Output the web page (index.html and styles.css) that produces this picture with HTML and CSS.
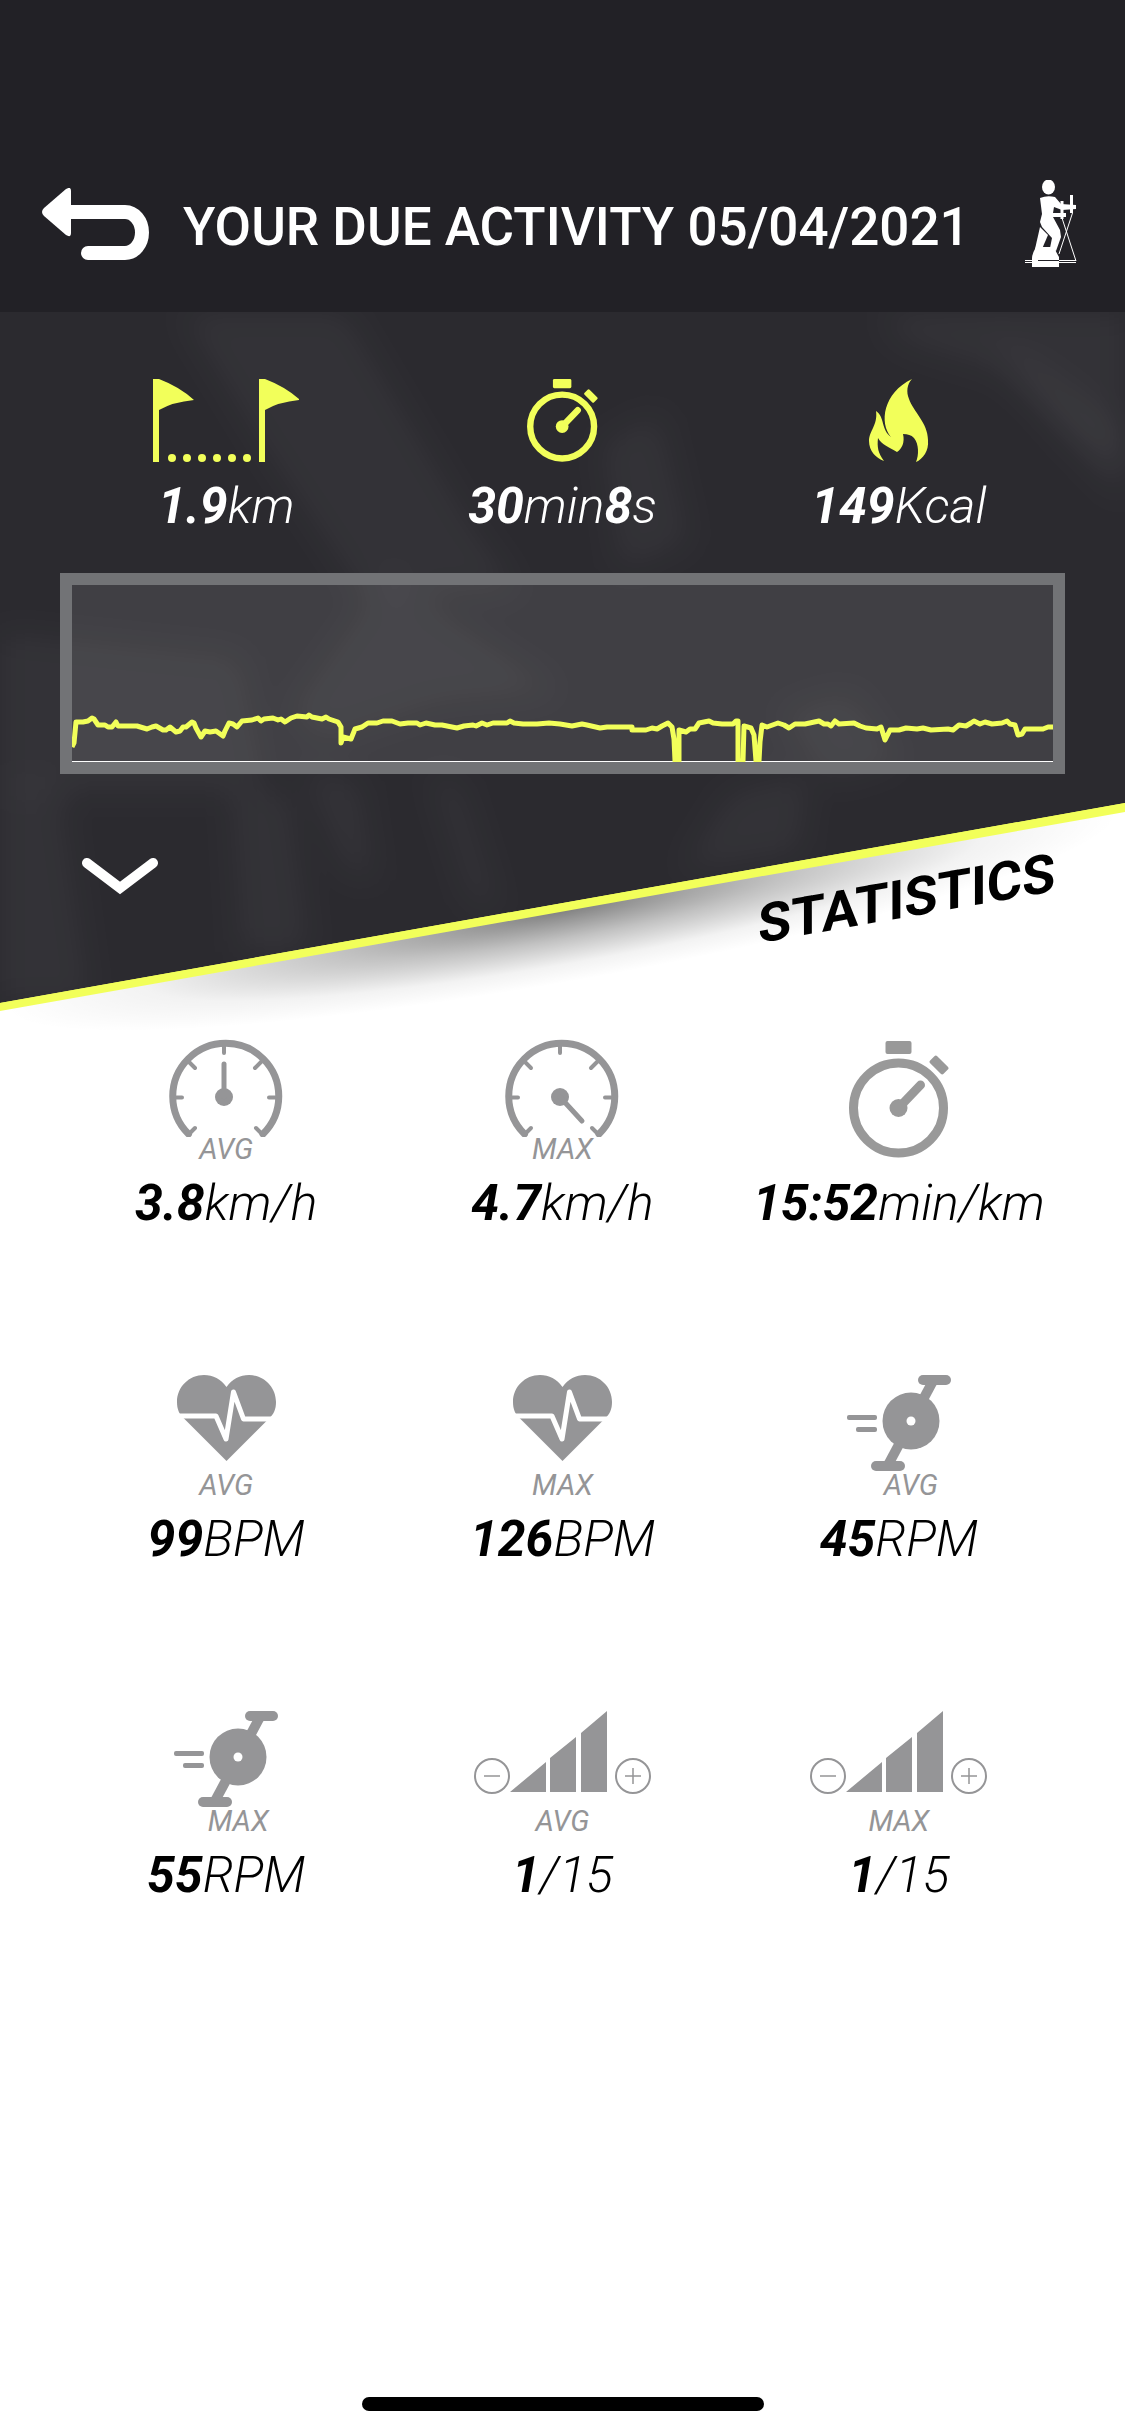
FILE: index.html
```html
<!DOCTYPE html>
<html lang="en">
<head>
    <meta charset="UTF-8">
    <meta name="viewport" content="width=device-width, initial-scale=1.0">
    <title>Your due activity</title>
    <link rel="stylesheet" href="styles.css">
</head>
<body>
    <!-- Shared icons -->
    <svg class="sprite" aria-hidden="true">
        <symbol id="stopwatch" viewBox="0 0 100 117">
            <circle cx="49.500" cy="67" r="45" fill="none" stroke="currentColor" stroke-width="9"/>
            <rect x="36.500" y="0" width="26" height="13" rx="2"/>
            <rect x="80.500" y="19" width="19" height="10" rx="2" transform="rotate(45 90 24)"/>
            <path d="M49.500 67L71.500 44" stroke="currentColor" stroke-width="9" stroke-linecap="round"/>
            <circle cx="49.500" cy="67" r="9"/>
        </symbol>
        <symbol id="dial" viewBox="0 0 114 98">
            <g fill="none" stroke="currentColor" stroke-linecap="round" stroke-linejoin="round">
                <path stroke-width="7" d="M19.500 95A53 53 0 1 1 94 95"/>
                <path stroke-width="4" d="M55 6v8M6 58.500h7M100 58.500h7M19 22l7 7M93 22l-7 7M20 95l6-6M93 95l-6-6"/>
            </g>
            <circle cx="55" cy="58" r="9"/>
        </symbol>
        <symbol id="heart" viewBox="0 0 99 86">
            <path d="M49.500 12C55 4 63 0 72 0C87 0 99 12 99 27C99 34 97 39 92 43.500L49.500 86L7 43.500C2 39 0 34 0 27C0 12 12 0 27 0C36 0 44 4 49.500 12Z"/>
            <path d="M0 41H39L49 64L56.500 17L66.500 44H99" fill="none" stroke="#fff" stroke-width="5" stroke-linejoin="round"/>
        </symbol>
        <symbol id="pedal" viewBox="0 0 104 96">
            <path d="M86 6L41 90" stroke="currentColor" stroke-width="10"/>
            <rect x="71" y="0" width="33" height="10" rx="5"/>
            <rect x="24" y="86" width="34" height="10" rx="5"/>
            <rect x="0" y="40" width="30" height="5" rx="2"/>
            <rect x="9" y="52" width="21" height="5" rx="2"/>
            <circle cx="64" cy="46" r="28.500"/>
            <circle cx="64" cy="46" r="4.500" fill="#fff"/>
        </symbol>
        <symbol id="levels" viewBox="0 0 177 84">
            <path d="M36 81L72 51V81ZM76 81V47L102 26V81ZM107 81V22L133 0V81Z"/>
            <g fill="none" stroke="currentColor" stroke-width="2">
                <circle cx="18" cy="65" r="17"/>
                <circle cx="159" cy="65" r="17"/>
                <path stroke-width="1.500" d="M10 65h16M151 65h16M159 57v16"/>
            </g>
        </symbol>
    </svg>

    <header class="topbar">
        <button class="icon-btn" type="button" aria-label="Back">
            <svg width="108" height="72" viewBox="0 0 108 72">
                <path d="M24 1Q29-2 29 3V45Q29 50 24 47L2 28Q-2 24 2 20Z" fill="#fff"/>
                <path d="M24 24H83A17 20.500 0 0 1 83 65H46" fill="none" stroke="#fff" stroke-width="14" stroke-linecap="round"/>
            </svg>
        </button>
        <h1>YOUR DUE ACTIVITY 05/04/2021</h1>
        <svg class="machine" width="52" height="88" viewBox="0 0 52 88" fill="#fff">
            <ellipse cx="23.500" cy="7" rx="6.500" ry="7.500"/>
            <path d="M15 18Q22 15 30 17L36 24L51 25V29L37 30L29 27L28 33H41V37H28L35 50L36 57L31 71L25 68L27 58L17 47L15 42L17 34Z"/>
            <path d="M15 47L23 55L17 69H10Z"/>
            <path d="M11 67H29Q31 72 34 77V87H7V78Q7 74 11 67Z"/>
            <path d="M46.500 15v18M37 21v18" stroke="#fff" stroke-width="3"/>
            <path d="M37 38L51 81M47.500 33L34 74M0 80.500H51M0 82.500H51" stroke="#fff" stroke-width="1" fill="none"/>
            <path d="M13 80.500H34" stroke="#222126" stroke-width="1"/>
        </svg>
    </header>

    <section class="hero">
        <svg class="backdrop" viewBox="0 0 1125 750" preserveAspectRatio="none" aria-hidden="true">
            <defs>
                <radialGradient id="shade">
                    <stop offset="0" stop-color="#000" stop-opacity=".5"/>
                    <stop offset=".4" stop-color="#000" stop-opacity=".24"/>
                    <stop offset=".75" stop-color="#000" stop-opacity=".05"/>
                    <stop offset="1" stop-color="#000" stop-opacity="0"/>
                </radialGradient>
                <filter id="soft" x="-30%" y="-30%" width="160%" height="160%"><feGaussianBlur stdDeviation="16"/></filter>
                <clipPath id="slope"><path d="M0 0H1125V491L0 691Z"/></clipPath>
            </defs>
            <ellipse cx="562" cy="598" rx="565" ry="72" fill="url(#shade)" transform="rotate(-10 562 598)"/>
            <path d="M0 0H1125V500L0 699Z" fill="#f2ff5a"/>
            <g clip-path="url(#slope)">
                <path d="M0 0H1125V491L0 691Z" fill="#2b2a2f"/>
                <g fill="#fff" fill-opacity=".04" filter="url(#soft)">
                    <path d="M180 0H345L410 110L470 210L520 280H360L260 130Z"/>
                    <path d="M880 0H1125V160L1000 60L900 30Z"/>
                    <path d="M990 20L1125 120V190L1060 120Z"/>
                    <path d="M600 130L660 100L690 230L620 260Z"/>
                    <path d="M0 320L240 345L265 470L250 480H0Z"/>
                    <path d="M290 400L390 260L440 300L560 380L440 390L320 430Z"/>
                    <path d="M300 450L360 470L375 570L345 560Z"/>
                    <path d="M430 460L460 470L500 600L470 590Z"/>
                    <path d="M780 400L850 380L900 450L830 470Z"/>
                    <path d="M730 480L810 460L800 540L680 560Z"/>
                    <path d="M0 470H60L90 690H0Z"/>
                    <path d="M230 480H290L310 640H240Z"/>
                </g>
            </g>
        </svg>

        <div class="grid summary">
            <div class="stat">
                <svg width="146" height="83" viewBox="0 0 146 83">
                    <path id="flag" d="M0 0H6Q27 8 41 21Q20 23 6 31V83H0Z"/>
                    <use href="#flag" x="106"/>
                    <path d="M19 79h76" fill="none" stroke="currentColor" stroke-width="8" stroke-linecap="round" stroke-dasharray="0 15"/>
                </svg>
                <p class="value"><strong>1.9</strong>km</p>
            </div>
            <div class="stat">
                <svg width="71" height="83"><use href="#stopwatch"/></svg>
                <p class="value"><strong>30</strong>min<strong>8</strong>s</p>
            </div>
            <div class="stat">
                <svg width="60" height="83" viewBox="0 0 60 83">
                    <path d="M43 0C38 5 37 13 40 20C44 32 59 44 59 61C60 72 54 80 47 83C50 76 50 65 45 59C42 56 39 55 34 55C36 63 33 70 28 73C20 68 13 66 9 59C8 68 9 74 15 82C7 79 0 72 0 62C0 52 9 46 7 32C16 38 12 51 22 58C10 44 14 14 43 0Z"/>
                </svg>
                <p class="value"><strong>149</strong>Kcal</p>
            </div>
        </div>

        <div class="chart">
            <svg viewBox="0 0 981 177" preserveAspectRatio="none" role="img" aria-label="Speed over time">
                <path d="M0 176.500H981" stroke="#fff" stroke-width="1"/>
                <polyline fill="none" stroke="#f2ff5a" stroke-width="5" stroke-linejoin="round" points="0,162 2,158 4,137 11,137 16,136 20,133 22,134 26,140 33,140 36,142 40,142 44,137 46,141 52,141 65,141 75,144 80,142 84,141 91,145 94,145 98,142 104,147 108,146 111,142 114,142 120,137 122,138 124,143 129,152 133,146 138,147 144,146 151,151 153,146 157,138 161,139 165,142 170,136 180,135 186,133 189,136 192,134 201,133 206,135 209,134 213,137 219,133 225,131 235,132 237,130 240,132 250,134 254,132 257,134 266,137 269,142 269,158 271,152 279,154 283,144 290,142 296,138 305,138 311,136 320,136 328,139 336,138 345,138 348,140 354,138 363,140 370,140 385,143 392,141 401,140 404,141 410,138 415,140 421,138 435,138 438,136 442,138 451,139 465,139 477,138 488,139 500,141 510,139 515,140 528,143 535,142 542,142 560,142 560,145 574,145 580,143 585,144 590,141 596,138 600,142 602,154 603,176 607,176 607,145 614,147 618,144 623,144 627,138 637,136 641,138 650,139 661,139 664,136 666,136 666,176 671,176 672,141 679,143 682,150 684,176 687,176 688,157 690,140 695,142 706,138 712,140 717,143 723,139 733,139 747,136 752,139 756,139 759,141 763,136 767,139 782,138 788,141 794,143 805,144 809,142 813,155 818,145 827,145 834,143 845,144 851,143 859,145 876,144 881,145 887,140 894,141 899,138 902,136 908,139 913,137 920,139 930,138 935,136 938,139 943,140 946,150 950,149 953,144 971,144 976,142 981,142"/>
            </svg>
        </div>

        <div class="hero-foot">
            <button class="icon-btn" type="button" aria-label="Collapse">
                <svg width="76" height="38" viewBox="0 0 76 38">
                    <path d="M5 6L38 31L71 6" fill="none" stroke="#fff" stroke-width="10" stroke-linecap="round"/>
                </svg>
            </button>
            <h2>STATISTICS</h2>
        </div>
    </section>

    <main class="grid stats">
        <div class="stat">
            <div class="pic">
                <svg width="114" height="98"><use href="#dial"/><path d="M55 58V25" stroke="currentColor" stroke-width="5" stroke-linecap="round"/></svg>
            </div>
            <span class="label">AVG</span>
            <p class="value"><strong>3.8</strong>km/h</p>
        </div>
        <div class="stat">
            <div class="pic">
                <svg width="114" height="98"><use href="#dial"/><path d="M55 58L77 82" stroke="currentColor" stroke-width="5" stroke-linecap="round"/></svg>
            </div>
            <span class="label">MAX</span>
            <p class="value"><strong>4.7</strong>km/h</p>
        </div>
        <div class="stat">
            <div class="pic tall">
                <svg width="100" height="117"><use href="#stopwatch"/></svg>
            </div>
            <p class="value"><strong>15:52</strong>min/km</p>
        </div>
        <div class="stat">
            <div class="pic"><svg width="99" height="86"><use href="#heart"/></svg></div>
            <span class="label">AVG</span>
            <p class="value"><strong>99</strong>BPM</p>
        </div>
        <div class="stat">
            <div class="pic"><svg width="99" height="86"><use href="#heart"/></svg></div>
            <span class="label">MAX</span>
            <p class="value"><strong>126</strong>BPM</p>
        </div>
        <div class="stat">
            <div class="pic"><svg width="104" height="96"><use href="#pedal"/></svg></div>
            <span class="label under-wheel">AVG</span>
            <p class="value"><strong>45</strong>RPM</p>
        </div>
        <div class="stat">
            <div class="pic"><svg width="104" height="96"><use href="#pedal"/></svg></div>
            <span class="label under-wheel">MAX</span>
            <p class="value"><strong>55</strong>RPM</p>
        </div>
        <div class="stat">
            <div class="pic"><svg width="177" height="84"><use href="#levels"/></svg></div>
            <span class="label">AVG</span>
            <p class="value"><strong>1</strong>/15</p>
        </div>
        <div class="stat">
            <div class="pic"><svg width="177" height="84"><use href="#levels"/></svg></div>
            <span class="label">MAX</span>
            <p class="value"><strong>1</strong>/15</p>
        </div>
    </main>

    <div class="home-bar"></div>
</body>
</html>
```
FILE: styles.css
```css
* {
    box-sizing: border-box;
}
body {
    font-family: Roboto, "Liberation Sans", sans-serif;
    background-color: #fff;
    color: #000;
    margin: 0;
    min-height: 100vh;
    display: flex;
    flex-direction: column;
}
h1, h2, p {
    margin: 0;
}
svg {
    display: block;
    fill: currentColor;
}
.sprite {
    position: absolute;
    width: 0;
    height: 0;
}
.icon-btn {
    padding: 0;
    border: none;
    background: none;
    cursor: pointer;
}

/* Top bar */
.topbar {
    display: flex;
    align-items: center;
    gap: 33px;
    padding: 180px 48px 44px 42px;
    background-color: #222126;
    color: #fff;
}
.topbar h1 {
    padding-top: 6px;
    font-size: 53px;
    line-height: 60px;
    font-weight: 500;
    white-space: nowrap;
}
.machine {
    margin-left: auto;
}

/* Dark panel with the slanted bottom edge */
.hero {
    position: relative;
    padding-top: 67px;
    color: #fff;
}
.backdrop {
    position: absolute;
    top: 0;
    left: 0;
    z-index: -1;
    width: 100%;
    height: 750px;
}
.grid {
    display: grid;
    grid-template-columns: repeat(3, 1fr);
    padding: 0 58px;
}
.stat {
    display: flex;
    flex-direction: column;
    align-items: center;
}
.value {
    margin-top: 12px;
    font-size: 50px;
    line-height: 60px;
    font-style: italic;
    font-weight: 300;
    white-space: nowrap;
}
.value strong {
    font-weight: 700;
}
.summary svg {
    color: #f2ff5a;
}
.summary .value {
    margin-top: 14px;
}
.chart {
    margin: 37px 60px 0;
    border: 12px solid #727376;
    background-color: rgba(255, 255, 255, 0.1);
}
.chart svg {
    width: 100%;
    height: 177px;
}
.hero-foot {
    display: flex;
    justify-content: space-between;
    align-items: flex-start;
    padding: 83px 70px 0 82px;
}
.hero-foot h2 {
    color: #000;
    font-size: 54px;
    line-height: 84px;
    font-weight: 700;
    transform: skewY(-10deg);
}

/* Statistics */
.stats {
    padding-top: 98px;
    row-gap: 142px;
}
.pic {
    height: 98px;
    color: #959597;
}
.pic.tall {
    height: 122px;
    padding-top: 2px;
    color: #999;
}
.label {
    color: #959597;
    font-size: 29px;
    line-height: 24px;
    font-style: italic;
}
.under-wheel {
    padding-left: 24px;
}

.home-bar {
    width: 402px;
    height: 14px;
    margin: auto auto 25px;
    border-radius: 7px;
    background-color: #000;
}
```
